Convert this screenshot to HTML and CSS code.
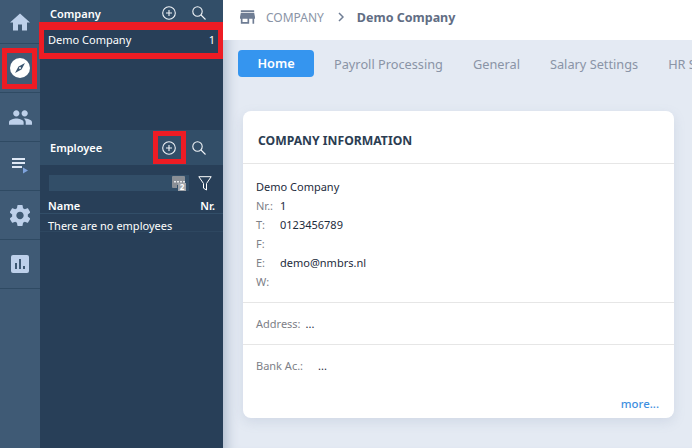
FILE: index.html
```html
<!DOCTYPE html>
<html lang="en">
<head>
<meta charset="utf-8">
<title>Company</title>
<link rel="stylesheet" href="styles.css">
</head>
<body>
<div class="app">
  <nav class="rail">
    <div class="rail-item"><svg class="ico-home" viewBox="2 3 20 17"><path d="M10 20v-6h4v6h5v-8h3L12 3 2 12h3v8z"/></svg></div>
    <div class="rail-item"><svg class="ico-compass" viewBox="0 0 20 20"><circle cx="10" cy="10" r="10" fill="#fff"/><path d="M15 5 11.500 11.500 5 15 8.500 8.500z" fill="#3d5873"/><circle cx="10" cy="10" r="1" fill="#fff"/></svg></div>
    <div class="rail-item"><svg class="ico-people" viewBox="1 5 22 14"><path d="M16 11c1.660 0 2.990-1.340 2.990-3S17.660 5 16 5s-3 1.340-3 3 1.340 3 3 3zm-8 0c1.660 0 2.990-1.340 2.990-3S9.660 5 8 5 5 6.340 5 8s1.340 3 3 3zm0 2c-2.330 0-7 1.170-7 3.500V19h14v-2.500C15 14.170 10.330 13 8 13zm8 0c-.29 0-.62.02-.97.05 1.160.84 1.970 1.970 1.970 3.450V19h6v-2.500c0-2.330-4.670-3.500-7-3.500z"/></svg></div>
    <div class="rail-item"><svg class="ico-queue" viewBox="0 0 16 16"><path d="M0 0h13v2H0zM0 4h13v2H0zM0 8h10v2H0z"/><path d="M11 9.500l5 3-5 3z" fill="#7fa3dc"/></svg></div>
    <div class="rail-item"><svg class="ico-gear" viewBox="2.500 2 19 20"><path d="M19.430 12.980c.04-.32.07-.64.07-.98s-.03-.66-.07-.98l2.110-1.650c.19-.15.24-.42.12-.64l-2-3.460c-.12-.22-.39-.3-.61-.22l-2.490 1c-.52-.4-1.080-.73-1.690-.98l-.38-2.650C14.460 2.180 14.250 2 14 2h-4c-.25 0-.46.18-.49.42l-.38 2.650c-.61.25-1.170.59-1.690.98l-2.490-1c-.23-.09-.49 0-.61.22l-2 3.460c-.13.22-.07.49.12.64l2.110 1.650c-.04.32-.07.65-.07.98s.03.66.07.98l-2.110 1.650c-.19.15-.24.42-.12.64l2 3.460c.12.22.39.3.61.22l2.490-1c.52.4 1.080.73 1.690.98l.38 2.650c.03.24.24.42.49.42h4c.25 0 .46-.18.49-.42l.38-2.650c.61-.25 1.170-.59 1.690-.98l2.490 1c.23.09.49 0 .61-.22l2-3.460c.12-.22.07-.49-.12-.64l-2.110-1.650zM12 15.500c-1.930 0-3.500-1.570-3.500-3.500s1.570-3.500 3.500-3.500 3.500 1.570 3.500 3.500-1.570 3.500-3.500 3.500z"/></svg></div>
    <div class="rail-item"><svg class="ico-chart" viewBox="0 0 18 18"><rect width="18" height="18" rx="2"/><path d="M4 8h2v6H4zM8 4h2v10H8zM12 11h2v3h-2z" fill="#3d5873"/></svg></div>
  </nav>

  <aside class="panel">
    <section class="list-section company-section">
      <header class="panel-head">
        <h2>Company</h2>
        <svg class="ico-plus" viewBox="0 0 14 14"><circle cx="7" cy="7" r="6.300"/><path d="M7 4v6M4 7h6"/></svg>
        <svg class="ico-search" viewBox="0 0 14 14"><circle cx="5.500" cy="5.500" r="4.700"/><path d="M9 9l4.500 4.500"/></svg>
      </header>
      <div class="company-row"><span>Demo Company</span><span>1</span></div>
    </section>

    <section class="list-section">
      <header class="panel-head">
        <h2>Employee</h2>
        <svg class="ico-plus" viewBox="0 0 14 14"><circle cx="7" cy="7" r="6.300"/><path d="M7 4v6M4 7h6"/></svg>
        <svg class="ico-search" viewBox="0 0 14 14"><circle cx="5.500" cy="5.500" r="4.700"/><path d="M9 9l4.500 4.500"/></svg>
      </header>
      <div class="filter-row">
        <div class="filter-input">
          <svg class="ico-count" viewBox="0 0 14 15"><path d="M1 0h11a1 1 0 0 1 1 1v8H5v3H1a1 1 0 0 1-1-1V1a1 1 0 0 1 1-1z" fill="#8a8f96"/><rect x="6" y="7" width="8" height="8" fill="#a2a6ab"/><path d="M2 5h2v1.500H2zM5 5h2v1.500H5zM8 5h2v1.500H8zM11 5h2v1.500h-2z" fill="#e6e8ea"/><text x="10" y="14.200" text-anchor="middle" class="count-num">2</text></svg>
        </div>
        <svg class="ico-funnel" viewBox="0 0 14 15"><path d="M.8.700h12.400L8.500 7.500v6.500l-3-1.800V7.500z"/></svg>
      </div>
      <div class="col-head"><span>Name</span><span>Nr.</span></div>
      <div class="empty-row">There are no employees</div>
    </section>
  </aside>

  <main class="main">
    <div class="topbar">
      <svg class="ico-store" viewBox="3 4 18 16"><path d="M20 4H4v2h16V4zm1 10v-2l-1-5H4l-1 5v2h1v6h10v-6h4v6h2v-6h1zm-9 4H6v-4h6v4z"/></svg>
      <span class="crumb">COMPANY</span>
      <svg class="ico-chevron" viewBox="0 0 6 10"><path d="M1 1l4 4-4 4"/></svg>
      <span class="crumb-current">Demo Company</span>
    </div>
    <div class="tabs">
      <span class="tab active">Home</span>
      <span class="tab">Payroll Processing</span>
      <span class="tab">General</span>
      <span class="tab">Salary Settings</span>
      <span class="tab">HR Settings</span>
    </div>
    <article class="card">
      <h1 class="card-title">COMPANY INFORMATION</h1>
      <div class="info">
        <div class="name">Demo Company</div>
        <div class="kv"><span class="k">Nr.:</span><span>1</span></div>
        <div class="kv"><span class="k">T:</span><span>0123456789</span></div>
        <div class="kv"><span class="k">F:</span></div>
        <div class="kv"><span class="k">E:</span><span>demo@nmbrs.nl</span></div>
        <div class="kv"><span class="k">W:</span></div>
      </div>
      <div class="line address"><span class="k">Address:</span><span>...</span></div>
      <div class="line bank"><span class="k">Bank Ac.:</span><span>...</span></div>
      <a class="more">more...</a>
    </article>
  </main>
</div>

<div class="mark mark-compass"></div>
<div class="mark mark-company"></div>
<div class="mark mark-add"></div>
</body>
</html>
```

FILE: styles.css
```css
* { box-sizing: border-box; }
html, body { margin: 0; height: 100%; overflow: hidden; }
body { font-family: "Noto Sans", "Open Sans", sans-serif; font-size: 11px; color: #1d2b3c; background: #e4eaf3; }
svg { display: block; flex: none; }

.app { display: flex; width: 692px; height: 448px; overflow: hidden; }

/* icon rail */
.rail { width: 40px; flex: none; background: #3f5a75; }
.rail-item { height: 49px; display: flex; align-items: center; justify-content: center; border-bottom: 1px solid #2f4a63; fill: #bdd0ea; }
.rail-item:first-child { height: 44px; }
.ico-home { width: 20px; height: 18px; }
.ico-compass { width: 20px; height: 20px; }
.ico-people { width: 23px; height: 15px; }
.ico-queue { width: 16px; height: 16px; fill: #dfe8f5; }
.ico-gear { width: 20px; height: 21px; }
.ico-chart { width: 18px; height: 18px; }

/* list panel */
.panel { width: 183px; flex: none; background: #283f58; color: #fff; }
.company-section { height: 130px; }
.panel-head { display: flex; align-items: center; background: #324e68; padding-left: 10px; }
.company-section .panel-head { height: 26px; }
.list-section:not(.company-section) .panel-head { height: 35px; }
.panel-head h2 { margin: 0; flex: 1; font-size: 11px; font-weight: 600; }
.ico-plus, .ico-search { width: 14px; height: 14px; fill: none; stroke: #f0f4f8; stroke-width: 1.100; }
.ico-plus { margin-right: 16px; }
.ico-search { margin-right: 17px; }

.company-row { display: flex; justify-content: space-between; padding: 0 8px; height: 26px; align-items: center; }

.filter-row { display: flex; align-items: center; padding: 10px 0 0 9px; }
.filter-input { width: 140px; height: 16px; background: #324e68; display: flex; justify-content: flex-end; align-items: center; padding-right: 3px; }
.ico-count { width: 14px; height: 15px; }
.count-num { font-size: 8px; font-weight: 700; fill: #fff; }
.ico-funnel { width: 14px; height: 15px; margin-left: 9px; fill: none; stroke: #fff; stroke-width: 1; }

.col-head { display: flex; justify-content: space-between; padding: 7px 8px 0; height: 23px; font-weight: 600; border-bottom: 1px solid #324e68; line-height: 15px; }
.empty-row { height: 18px; padding: 4px 8px 0; line-height: 15px; border-bottom: 1px solid #2e4760; }

/* main */
.main { flex: 1; min-width: 0; position: relative; box-shadow: inset 14px 0 12px -10px #b0bccd; }
.topbar { height: 40px; background: #fff; display: flex; align-items: center; padding: 0 0 6px 17px; }
.ico-store { width: 15px; height: 14px; fill: #6f7d94; margin-right: 11px; }
.crumb { color: #8a94a6; font-size: 12px; }
.ico-chevron { width: 6px; height: 10px; margin: 0 13px 0 14px; fill: none; stroke: #6f7d94; stroke-width: 1.500; }
.crumb-current { color: #616d84; font-weight: 700; font-size: 12.500px; }

.tabs { display: flex; align-items: center; gap: 30px; margin: 10px 0 0 15px; height: 27px; white-space: nowrap; overflow: hidden; }
.tab { color: #8a94a6; font-size: 12.750px; }
.tab.active { width: 76px; height: 27px; line-height: 27px; text-align: center; background: #3595ef; border-radius: 4px; color: #fff; font-weight: 600; margin-right: -10px; flex: none; }

.card { width: 431px; height: 307px; margin: 34px 0 0 20px; background: #fff; border-radius: 8px; box-shadow: 0 4px 12px rgba(120,140,170,.18); position: relative; }
.card-title { margin: 0; height: 53px; padding: 22px 15px 0; font-size: 12.200px; font-weight: 700; line-height: 16px; color: #2b3d52; border-bottom: 1px solid #e6e6e6; }
.info { height: 139px; padding: 13px 13px 0; border-bottom: 1px solid #e6e6e6; line-height: 19px; }
.kv { display: flex; }
.k { color: #7d8087; }
.kv .k { width: 24px; }
.line { padding-left: 13px; display: flex; align-items: center; }
.address { height: 42px; border-bottom: 1px solid #e6e6e6; gap: 5px; }
.bank { height: 40px; gap: 15px; }
.more { position: absolute; right: 15px; bottom: 7px; color: #3f8fe0; font-size: 11.400px; font-weight: 500; }

/* red annotation frames laid over the screenshot */
.mark { position: absolute; border: 5px solid #ed1c24; pointer-events: none; }
.mark-compass { left: 2px; top: 48px; width: 35px; height: 41px; }
.mark-company { left: 39px; top: 22px; width: 184px; height: 37px; border-width: 8px 5px 6px; }
.mark-add { left: 153px; top: 131px; width: 33px; height: 33px; }
```
